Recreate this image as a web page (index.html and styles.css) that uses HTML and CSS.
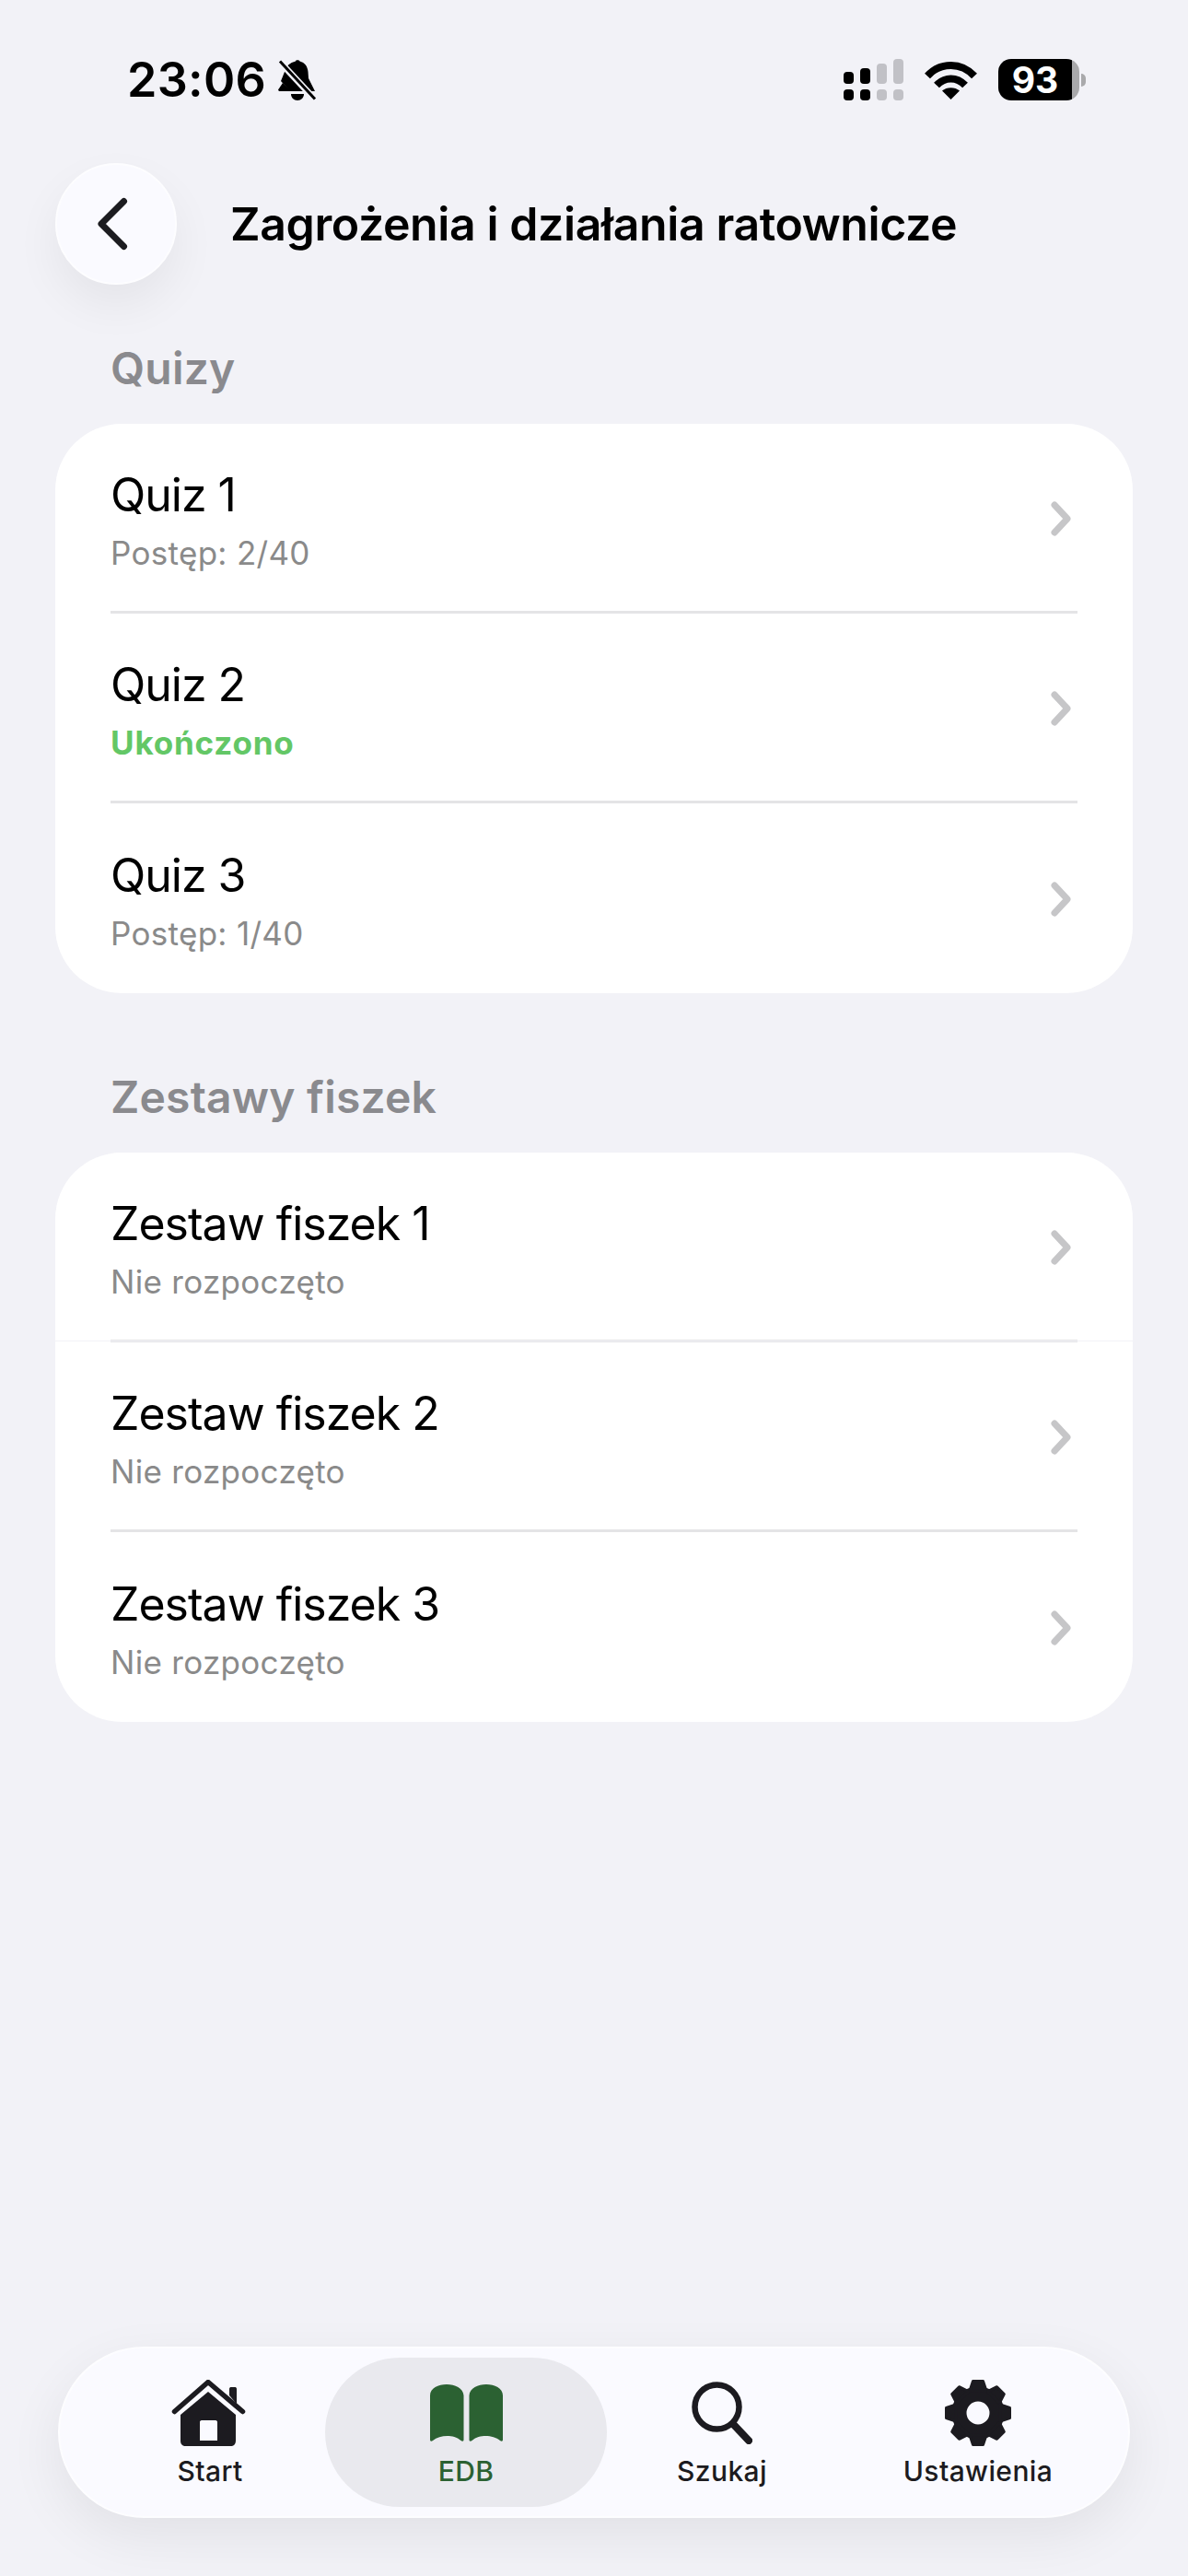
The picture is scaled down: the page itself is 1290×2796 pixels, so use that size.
FILE: index.html
```html
<!DOCTYPE html>
<html lang="pl">
<head>
    <meta charset="UTF-8">
    <meta name="viewport" content="width=device-width, initial-scale=1.0">
    <title>Zagrożenia i działania ratownicze</title>
    <link rel="stylesheet" href="styles.css">
</head>
<body>
    <div class="screen">
        <!-- Status bar -->
        <div class="status-bar">
            <div class="status-left">
                <span class="time">23:06</span>
                <svg class="bell" viewBox="0 0 42 45">
                    <path d="M19 2.500C19 .8 23 .8 23.500 2.500C29 4 32 8 32.500 14L33 21L40 35H13L3 24L7 14C8 8 13 4 19 2.500Z" fill="#000"/>
                    <path d="M0 33.500L5 26L14 35H1Z" fill="#000"/>
                    <path d="M14 38H28C28 42 25 45 21 45C17 45 14 42 14 38Z" fill="#000"/>
                    <path d="M0 1L40 44" stroke="#f2f2f7" stroke-width="7"/>
                    <path d="M2 2.500L40 43.500" stroke="#000" stroke-width="3"/>
                </svg>
            </div>
            <div class="status-right">
                <svg class="signal" viewBox="0 0 65 45">
                    <rect x="0" y="14" width="11" height="13" rx="4" fill="#000"/>
                    <rect x="18" y="10" width="11" height="17" rx="4" fill="#000"/>
                    <rect x="36" y="5" width="11" height="22" rx="4" fill="#c1c1c6"/>
                    <rect x="54" y="0" width="11" height="27" rx="4" fill="#c1c1c6"/>
                    <rect x="0" y="33" width="11" height="12" rx="4" fill="#000"/>
                    <rect x="18" y="33" width="11" height="12" rx="4" fill="#000"/>
                    <rect x="36" y="33" width="11" height="12" rx="4" fill="#c1c1c6"/>
                    <rect x="54" y="33" width="11" height="12" rx="4" fill="#c1c1c6"/>
                </svg>
                <svg class="wifi" viewBox="0 0 57 43">
                    <path d="M3 17.500C17 2 40 2 54 17.500" fill="none" stroke="#000" stroke-width="8"/>
                    <path d="M13 27.500C22 18 35 18 44 27.500" fill="none" stroke="#000" stroke-width="8"/>
                    <path d="M28.500 43L19 33.500C24 29 33 29 38 33.500Z" fill="#000"/>
                </svg>
                <div class="battery">93</div>
            </div>
        </div>

        <!-- Header -->
        <header class="top-bar">
            <button class="back-btn" type="button" aria-label="Wstecz">
                <svg class="back-icon" viewBox="0 0 34 58">
                    <path d="M29.500 4.500L5 29L29.500 53.500" fill="none" stroke="#1c1c20" stroke-width="7" stroke-linecap="round" stroke-linejoin="round"/>
                </svg>
            </button>
            <h1 class="page-title">Zagrożenia i działania ratownicze</h1>
        </header>

        <main class="content">
            <h2 class="section-title">Quizy</h2>
            <div class="card">
                <div class="row">
                    <div>
                        <div class="row-title">Quiz 1</div>
                        <div class="row-sub">Postęp: 2/40</div>
                    </div>
                    <svg class="chevron" viewBox="0 0 22 38"><path d="M4 4L18 19L4 34"/></svg>
                </div>
                <div class="row">
                    <div>
                        <div class="row-title">Quiz 2</div>
                        <div class="row-sub done">Ukończono</div>
                    </div>
                    <svg class="chevron" viewBox="0 0 22 38"><path d="M4 4L18 19L4 34"/></svg>
                </div>
                <div class="row">
                    <div>
                        <div class="row-title">Quiz 3</div>
                        <div class="row-sub">Postęp: 1/40</div>
                    </div>
                    <svg class="chevron" viewBox="0 0 22 38"><path d="M4 4L18 19L4 34"/></svg>
                </div>
            </div>

            <h2 class="section-title section-gap">Zestawy fiszek</h2>
            <div class="card">
                <div class="row seam">
                    <div>
                        <div class="row-title">Zestaw fiszek 1</div>
                        <div class="row-sub">Nie rozpoczęto</div>
                    </div>
                    <svg class="chevron" viewBox="0 0 22 38"><path d="M4 4L18 19L4 34"/></svg>
                </div>
                <div class="row">
                    <div>
                        <div class="row-title">Zestaw fiszek 2</div>
                        <div class="row-sub">Nie rozpoczęto</div>
                    </div>
                    <svg class="chevron" viewBox="0 0 22 38"><path d="M4 4L18 19L4 34"/></svg>
                </div>
                <div class="row">
                    <div>
                        <div class="row-title">Zestaw fiszek 3</div>
                        <div class="row-sub">Nie rozpoczęto</div>
                    </div>
                    <svg class="chevron" viewBox="0 0 22 38"><path d="M4 4L18 19L4 34"/></svg>
                </div>
            </div>
        </main>

        <!-- Bottom tabs -->
        <nav class="tab-bar">
            <a class="tab">
                <span class="icon-box">
                    <svg class="icon-home" viewBox="0 0 81 72">
                        <path d="M3.500 34.500L40 2.500L77.500 34.500" fill="none" stroke="#1c1b20" stroke-width="5.500" stroke-linecap="round" stroke-linejoin="round"/>
                        <path d="M63 17V10C63 8.500 64 8 65 8H69C70 8 71 8.500 71 10V26Z" fill="#1c1b20"/>
                        <path fill-rule="evenodd" d="M10 38L40 13L70 38V66C70 70 68 72 64 72H16C12 72 10 70 10 66ZM31 46V66H50V46C50 45 49.500 44 48 44H33C31.500 44 31 45 31 46Z" fill="#1c1b20"/>
                    </svg>
                </span>
                <span class="tab-label">Start</span>
            </a>
            <a class="tab active">
                <span class="icon-box">
                    <svg class="icon-book" viewBox="0 0 79 62">
                        <path d="M0 12C0 4 9 0 18 0C27 0 36 4 36.500 12V60C36.500 62 35 62 33.500 61C29 57 24 56 18.500 56C13 56 7 57.500 3 61C1.500 62 0 62 0 60Z" fill="#2b6132"/>
                        <path d="M79 12C79 4 70 0 61 0C52 0 43 4 42.500 12V60C42.500 62 44 62 45.500 61C50 57 55 56 60.500 56C66 56 72 57.500 76 61C77.500 62 79 62 79 60Z" fill="#2b6132"/>
                    </svg>
                </span>
                <span class="tab-label">EDB</span>
            </a>
            <a class="tab">
                <span class="icon-box">
                    <svg class="icon-search" viewBox="0 0 66 68">
                        <circle cx="27.500" cy="27.500" r="24" fill="none" stroke="#1c1b20" stroke-width="6.500"/>
                        <path d="M45 46L62 64" fill="none" stroke="#1c1b20" stroke-width="8" stroke-linecap="round"/>
                    </svg>
                </span>
                <span class="tab-label">Szukaj</span>
            </a>
            <a class="tab">
                <span class="icon-box">
                    <svg class="icon-gear" viewBox="0 0 74 72">
                        <g transform="translate(37 36)" fill="#1c1b20" stroke="#1c1b20" stroke-width="3" stroke-linejoin="round">
                            <circle r="20.500" fill="none" stroke-width="16"/>
                            <path d="M-9 -24L-5.500 -34.500H5.500L9 -24Z"/>
                            <path d="M-9 -24L-5.500 -34.500H5.500L9 -24Z" transform="rotate(45)"/>
                            <path d="M-9 -24L-5.500 -34.500H5.500L9 -24Z" transform="rotate(90)"/>
                            <path d="M-9 -24L-5.500 -34.500H5.500L9 -24Z" transform="rotate(135)"/>
                            <path d="M-9 -24L-5.500 -34.500H5.500L9 -24Z" transform="rotate(180)"/>
                            <path d="M-9 -24L-5.500 -34.500H5.500L9 -24Z" transform="rotate(225)"/>
                            <path d="M-9 -24L-5.500 -34.500H5.500L9 -24Z" transform="rotate(270)"/>
                            <path d="M-9 -24L-5.500 -34.500H5.500L9 -24Z" transform="rotate(315)"/>
                        </g>
                    </svg>
                </span>
                <span class="tab-label">Ustawienia</span>
            </a>
        </nav>
    </div>
</body>
</html>
```

FILE: styles.css
```css
* {
    box-sizing: border-box;
}

body {
    margin: 0;
    background-color: #f2f2f7;
    font-family: Inter, "Liberation Sans", sans-serif;
    color: #000;
}

.screen {
    display: flex;
    flex-direction: column;
    height: 2796px;
    overflow: hidden;
}

/* Status bar */
.status-bar {
    display: flex;
    justify-content: space-between;
    align-items: center;
    height: 45px;
    margin-top: 64px;
    padding: 0 118px 0 138px;
}

.status-left,
.status-right {
    display: flex;
    align-items: center;
}

.time {
    font-size: 52px;
    font-weight: 600;
    line-height: 45px;
    letter-spacing: 0.3px;
}

.bell {
    width: 42px;
    height: 45px;
    margin-left: 13px;
}

.signal {
    width: 65px;
    height: 45px;
}

.wifi {
    width: 57px;
    height: 43px;
    margin-left: 23px;
}

.battery {
    position: relative;
    width: 88px;
    height: 45px;
    margin-left: 23px;
    border-radius: 14px;
    background: linear-gradient(90deg, #000 91%, #a9a9ab 91%);
    color: #fff;
    font-size: 39px;
    font-weight: 700;
    line-height: 45px;
    padding-right: 8px;
    text-align: center;
}

.battery::after {
    content: "";
    position: absolute;
    top: 16px;
    left: 90px;
    width: 5px;
    height: 14px;
    border-radius: 0 5px 5px 0;
    background-color: #a9a9ab;
}

/* Header */
.top-bar {
    display: flex;
    align-items: center;
    gap: 58px;
    margin-top: 68px;
    padding-left: 60px;
}

.back-btn {
    display: flex;
    align-items: center;
    justify-content: center;
    width: 132px;
    height: 132px;
    padding: 0 8px 0 0;
    border: 2px solid #fdfdff;
    border-radius: 50%;
    background-color: #fafaff;
    box-shadow: 0 22px 50px rgba(0, 0, 0, 0.06);
}

.back-icon {
    width: 34px;
    height: 58px;
}

.page-title {
    margin: 0;
    font-size: 50px;
    font-weight: 600;
    line-height: 60px;
    letter-spacing: -0.4px;
}

/* Lists */
.content {
    flex: 1;
    padding: 61px 60px 0;
}

.section-title {
    margin: 0 0 30px 60px;
    font-size: 48px;
    font-weight: 600;
    line-height: 60px;
    letter-spacing: 0.2px;
    color: #8a8a8e;
}

.section-gap {
    margin-top: 83px;
}

.card {
    border-radius: 72px;
    background-color: #fff;
    overflow: hidden;
}

.row {
    position: relative;
    display: flex;
    justify-content: space-between;
    align-items: center;
    height: 206px;
    margin: 0 60px;
    padding-right: 7px;
    border-bottom: 3px solid #e4e4e6;
}

.row:last-child {
    border-bottom: none;
}

/* faint line that runs on to the card edges */
.seam::after {
    content: "";
    position: absolute;
    left: -60px;
    right: -60px;
    bottom: -2px;
    height: 1px;
    background-color: #f2f2f7;
    z-index: 0;
}

.row-title {
    font-size: 50px;
    line-height: 60px;
    letter-spacing: -1px;
}

.row-sub {
    margin-top: 16px;
    font-size: 35px;
    line-height: 34px;
    letter-spacing: 0.3px;
    color: #8a8a8a;
}

.done {
    font-weight: 700;
    letter-spacing: 0.8px;
    color: #63c766;
}

.chevron {
    width: 22px;
    height: 38px;
    margin-top: 2px;
    fill: none;
    stroke: #c6c6c8;
    stroke-width: 7;
    stroke-linecap: round;
    stroke-linejoin: round;
}

/* Bottom tabs */
.tab-bar {
    display: grid;
    grid-template-columns: repeat(4, 278px);
    width: 1164px;
    height: 186px;
    margin: 0 0 63px 63px;
    padding: 0 24px;
    border: 2px solid #fdfdff;
    border-radius: 93px;
    background-color: #fafaff;
    box-shadow: 0 20px 60px rgba(0, 0, 0, 0.07);
}

.tab {
    position: relative;
    display: flex;
    flex-direction: column;
    align-items: center;
    padding-top: 34px;
    color: #1c1b20;
}

.tab.active {
    color: #2b6132;
}

.tab.active::before {
    content: "";
    position: absolute;
    top: 10px;
    bottom: 10px;
    left: -14px;
    right: -14px;
    border-radius: 81px;
    background-color: #e9e9ee;
}

.icon-box {
    position: relative;
    display: flex;
    align-items: center;
    justify-content: center;
    height: 72px;
}

.icon-home {
    width: 81px;
    height: 72px;
    margin-left: -3px;
}

.icon-book {
    width: 79px;
    height: 62px;
}

.icon-search {
    width: 66px;
    height: 68px;
}

.icon-gear {
    width: 74px;
    height: 72px;
}

.tab-label {
    position: relative;
    margin-top: 8px;
    font-size: 30px;
    font-weight: 500;
    line-height: 38px;
    letter-spacing: 0.4px;
}
```
